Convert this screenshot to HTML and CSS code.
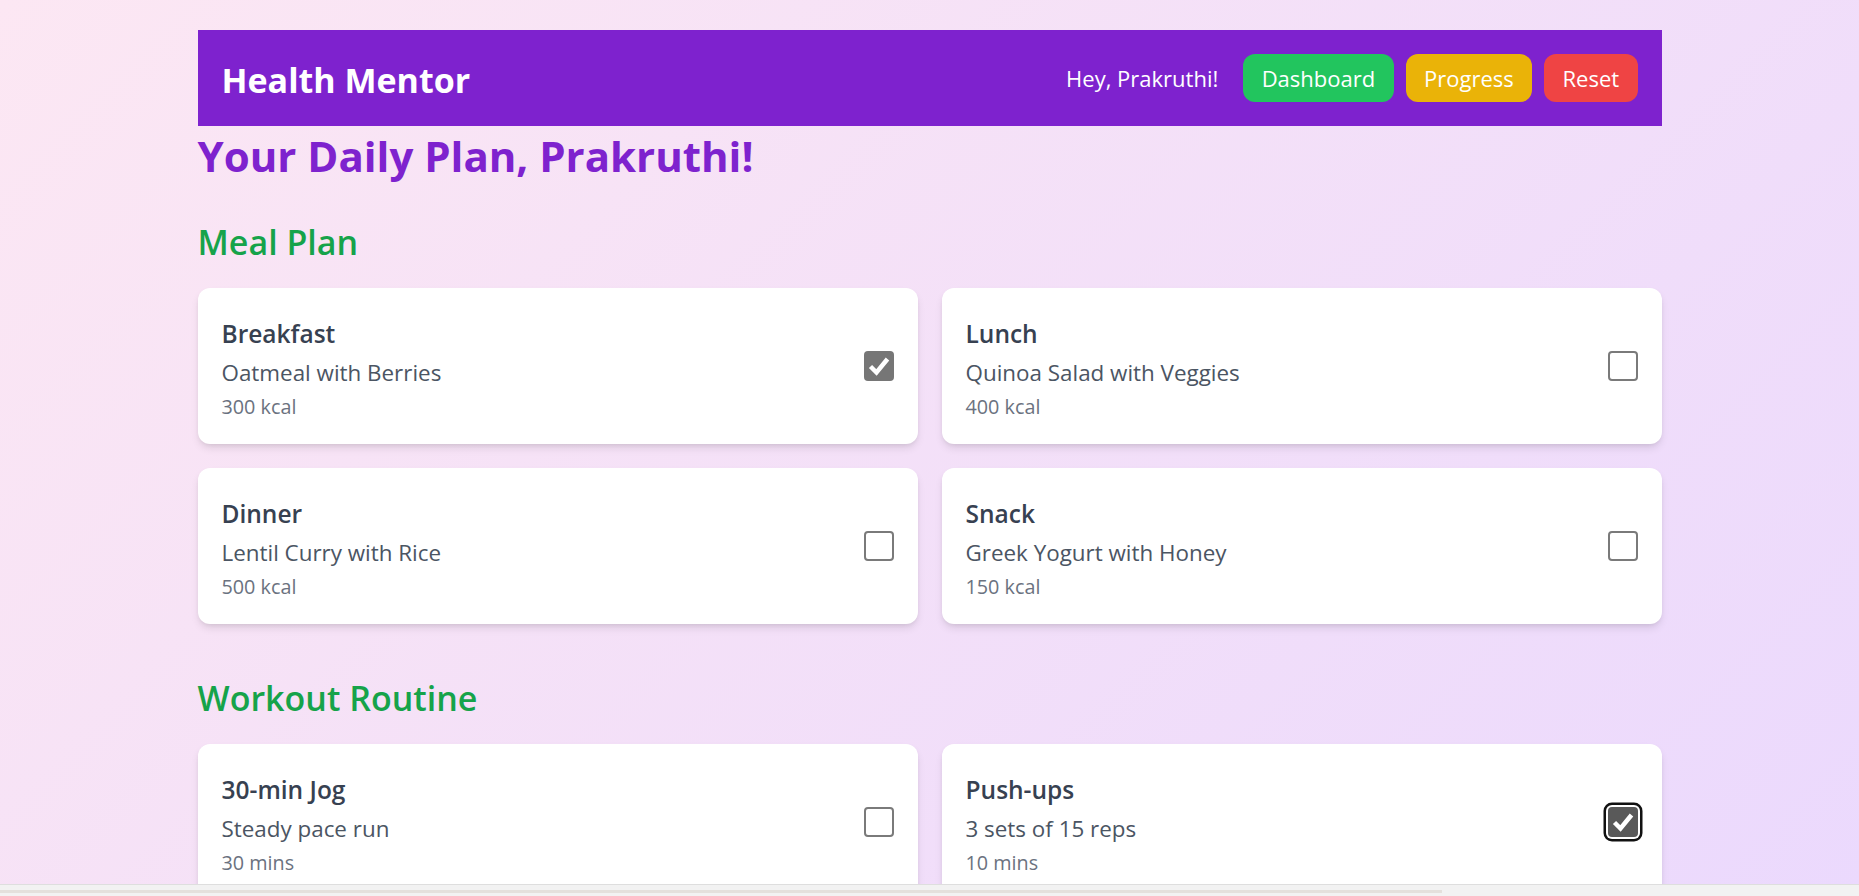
FILE: index.html
```html
<!DOCTYPE html>
<html lang="en">
<head>
<meta charset="utf-8">
<title>Health Mentor</title>
<link rel="stylesheet" href="styles.css">
</head>
<body>
<div class="page">
  <header class="topbar">
    <h1 class="brand">Health Mentor</h1>
    <nav class="nav">
      <span class="greet">Hey, Prakruthi!</span>
      <button class="btn btn-green">Dashboard</button>
      <button class="btn btn-yellow">Progress</button>
      <button class="btn btn-red">Reset</button>
    </nav>
  </header>

  <main>
    <h2 class="page-title">Your Daily Plan, Prakruthi!</h2>

    <section class="section">
      <h3 class="section-title">Meal Plan</h3>
      <div class="grid">
        <div class="card">
          <div class="card-body">
            <div class="card-title">Breakfast</div>
            <div class="card-desc">Oatmeal with Berries</div>
            <div class="card-meta">300 kcal</div>
          </div>
          <span class="check is-checked" role="checkbox" aria-checked="true">
            <svg viewBox="0 0 30 30" width="30" height="30"><path d="M6.5 15.5 L12.5 21.5 L23.5 8" fill="none" stroke="#fff" stroke-width="4.5"/></svg>
          </span>
        </div>
        <div class="card">
          <div class="card-body">
            <div class="card-title">Lunch</div>
            <div class="card-desc">Quinoa Salad with Veggies</div>
            <div class="card-meta">400 kcal</div>
          </div>
          <span class="check" role="checkbox" aria-checked="false"></span>
        </div>
        <div class="card">
          <div class="card-body">
            <div class="card-title">Dinner</div>
            <div class="card-desc">Lentil Curry with Rice</div>
            <div class="card-meta">500 kcal</div>
          </div>
          <span class="check" role="checkbox" aria-checked="false"></span>
        </div>
        <div class="card">
          <div class="card-body">
            <div class="card-title">Snack</div>
            <div class="card-desc">Greek Yogurt with Honey</div>
            <div class="card-meta">150 kcal</div>
          </div>
          <span class="check" role="checkbox" aria-checked="false"></span>
        </div>
      </div>
    </section>

    <section class="section">
      <h3 class="section-title">Workout Routine</h3>
      <div class="grid">
        <div class="card">
          <div class="card-body">
            <div class="card-title">30-min Jog</div>
            <div class="card-desc">Steady pace run</div>
            <div class="card-meta">30 mins</div>
          </div>
          <span class="check" role="checkbox" aria-checked="false"></span>
        </div>
        <div class="card">
          <div class="card-body">
            <div class="card-title">Push-ups</div>
            <div class="card-desc">3 sets of 15 reps</div>
            <div class="card-meta">10 mins</div>
          </div>
          <span class="check is-checked is-focused" role="checkbox" aria-checked="true">
            <svg viewBox="0 0 30 30" width="30" height="30"><path d="M6.5 15.5 L12.5 21.5 L23.5 8" fill="none" stroke="#fff" stroke-width="4.5"/></svg>
          </span>
        </div>
      </div>
    </section>
  </main>
</div>
<div class="hscroll"><div class="hscroll-thumb"></div></div>
</body>
</html>
```

FILE: styles.css
```css
html {
  scrollbar-width: none;
  min-height: 100%;
  background: linear-gradient(135deg, #fce7f3 0%, #ebd9fd 100%);
  background-attachment: fixed;
}

body {
  margin: 0;
  padding: 30px 0 40px;
  font-family: "Open Sans", "Noto Sans", sans-serif;
  color: #374151;
}

.page {
  width: 1464px;
  margin: 0 auto;
}

.topbar {
  box-sizing: border-box;
  height: 96px;
  padding: 0 24px;
  background: #7e22ce;
  display: flex;
  align-items: center;
  justify-content: space-between;
}

.brand {
  margin: 0;
  padding-top: 3px;
  font-size: 34px;
  line-height: 48px;
  font-weight: 700;
  color: #fff;
}

.nav {
  display: flex;
  align-items: center;
  gap: 12px;
}

.greet {
  margin-right: 13px;
  font-size: 22px;
  color: #fff;
}

.btn {
  height: 48px;
  padding: 0 18.4px;
  border: 0;
  border-radius: 12px;
  font-family: inherit;
  font-size: 22px;
  color: #fff;
  cursor: pointer;
}

.btn-green { background: #22c55e; }
.btn-yellow { background: #eab308; }
.btn-red { background: #ef4444; }

.page-title {
  margin: 4px 0 0;
  font-size: 42px;
  line-height: 52px;
  font-weight: 700;
  color: #7e22ce;
}

.section {
  margin-top: 52px;
}

.page-title + .section {
  margin-top: 38px;
}

.section-title {
  margin: 0 0 24px;
  font-size: 34px;
  line-height: 44px;
  font-weight: 600;
  color: #16a34a;
}

.grid {
  display: grid;
  grid-template-columns: 1fr 1fr;
  gap: 24px;
}

.card {
  background: #fff;
  border-radius: 12px;
  padding: 23px 24px;
  display: flex;
  align-items: center;
  justify-content: space-between;
  box-shadow: 0 5px 8px -1px rgba(0, 0, 0, 0.1), 0 2px 5px -2px rgba(0, 0, 0, 0.1);
}

.card-body {
  padding-top: 7px;
}

.card-title {
  font-size: 24.5px;
  line-height: 32px;
  font-weight: 600;
  color: #374151;
}

.card-desc {
  margin-top: 6px;
  font-size: 22.4px;
  line-height: 34px;
  color: #4b5563;
}

.card-meta {
  margin-top: 3px;
  font-size: 19.8px;
  line-height: 28px;
  color: #6b7280;
}

.check {
  box-sizing: border-box;
  flex-shrink: 0;
  width: 30px;
  height: 30px;
  border: 2px solid #7a7a7a;
  border-radius: 4px;
  background: #fff;
}

.check svg {
  display: block;
}

.check.is-checked {
  border: 0;
  background: #767676;
}

.check.is-focused {
  background: #595959;
  box-shadow: 0 0 0 2px #fff, 0 0 0 4.5px #111;
}

.hscroll {
  position: fixed;
  left: 0;
  right: 0;
  bottom: 0;
  height: 11px;
  background: #f2f2f2;
  border-top: 1px solid #dedede;
}

.hscroll-thumb {
  position: absolute;
  left: 0;
  top: 5px;
  width: 1442px;
  height: 3px;
  background: #e4e0dc;
}
```
